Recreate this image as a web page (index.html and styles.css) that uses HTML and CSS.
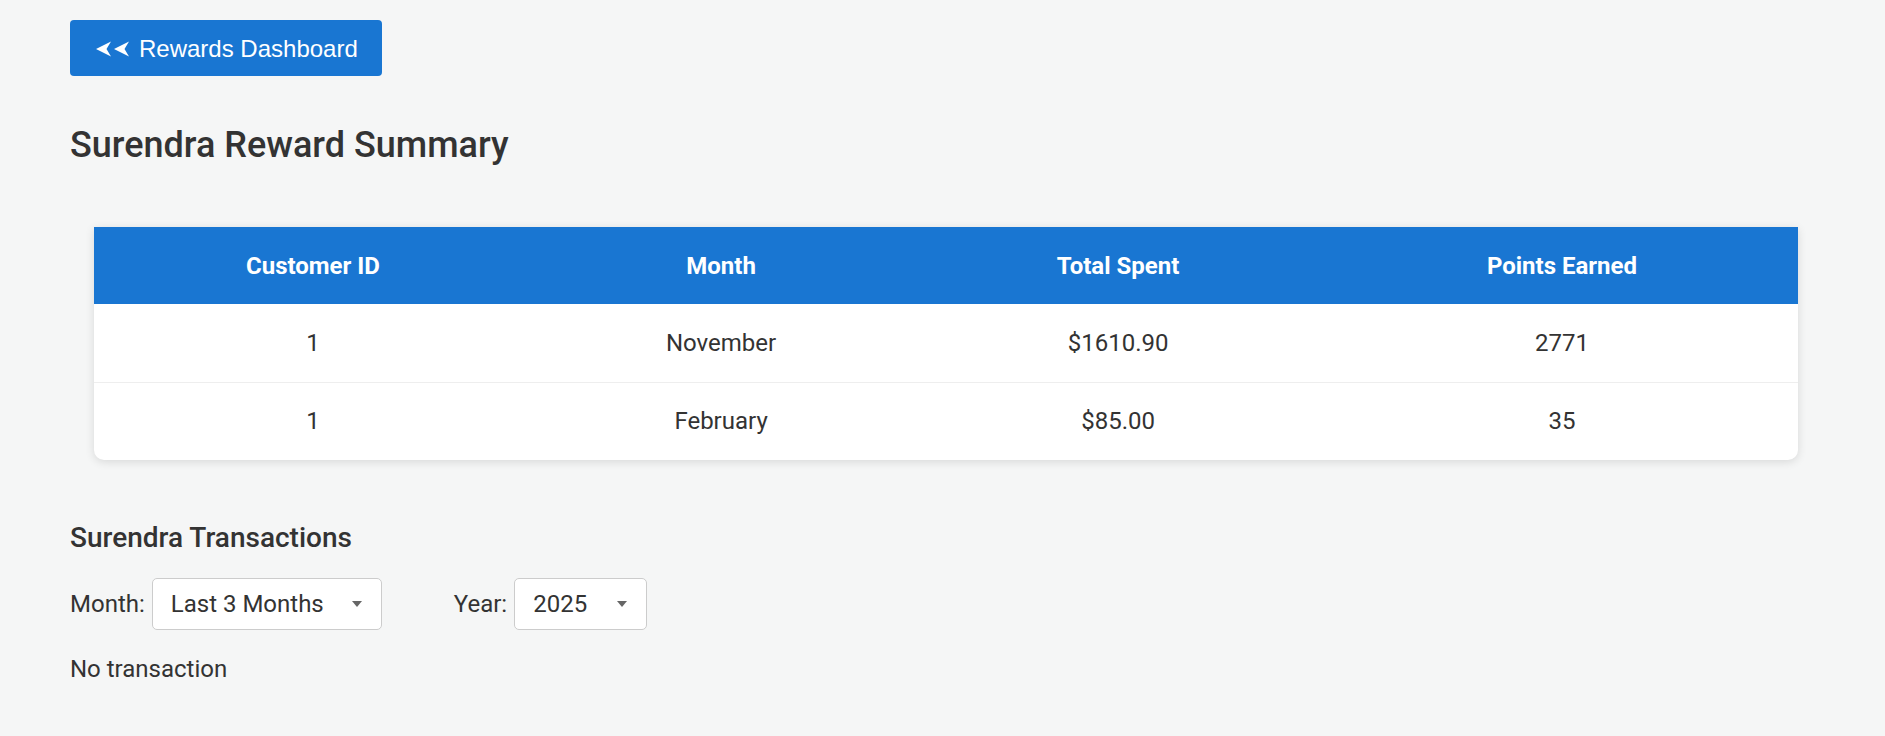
FILE: index.html
```html
<!DOCTYPE html>
<html lang="en">
<head>
<meta charset="utf-8">
<title>Surendra Reward Summary</title>
<link rel="stylesheet" href="styles.css">
</head>
<body>
<main class="page">
  <button class="back-btn" type="button">
    <svg class="back-icon" width="34" height="16" viewBox="0 0 34 16" aria-hidden="true">
      <polygon points="0,8 15,0.5 10.5,8 15,15.5" fill="#fff"/>
      <polygon points="18,8 33,0.5 28.5,8 33,15.5" fill="#fff"/>
    </svg>
    <span>Rewards Dashboard</span>
  </button>

  <h1 class="title">Surendra Reward Summary</h1>

  <div class="card">
    <table class="summary">
      <colgroup>
        <col class="c1"><col class="c2"><col class="c3"><col class="c4">
      </colgroup>
      <thead>
        <tr><th>Customer ID</th><th>Month</th><th>Total Spent</th><th>Points Earned</th></tr>
      </thead>
      <tbody>
        <tr><td>1</td><td>November</td><td>$1610.90</td><td>2771</td></tr>
        <tr><td>1</td><td>February</td><td>$85.00</td><td>35</td></tr>
      </tbody>
    </table>
  </div>

  <h2 class="subtitle">Surendra Transactions</h2>

  <div class="filters">
    <label class="field">
      <span class="label">Month:</span>
      <span class="select-wrap month">
        <select class="select"><option>Last 3 Months</option></select>
      </span>
    </label>
    <label class="field">
      <span class="label">Year:</span>
      <span class="select-wrap year">
        <select class="select"><option>2025</option></select>
      </span>
    </label>
  </div>

  <p class="empty">No transaction</p>
</main>
</body>
</html>
```

FILE: styles.css
```css
* { box-sizing: border-box; }

html, body {
  margin: 0;
  background: #f5f6f6;
}

body {
  font-family: Roboto, "Noto Sans", Arial, sans-serif;
  color: #333;
}

.page {
  padding: 20px 70px 40px 70px;
}

.back-btn {
  display: flex;
  align-items: center;
  gap: 9px;
  width: 312px;
  height: 56px;
  padding: 1px 0 0 26px;
  background: #1976d2;
  color: #fff;
  border: none;
  border-radius: 4px;
  font-family: "Liberation Sans", Arial, sans-serif;
  font-size: 24px;
  line-height: 1;
  cursor: pointer;
}

.back-icon { display: block; flex: none; }

.title {
  margin: 47px 0 0 0;
  font-size: 36px;
  line-height: 44px;
  font-weight: 500;
  color: #333;
}

.card {
  margin: 60px 17px 0 24px;
  background: #fff;
  border-radius: 0 0 10px 10px;
  box-shadow: 0 2px 10px rgba(0, 0, 0, 0.12);
}

.summary {
  width: 100%;
  border-collapse: collapse;
  table-layout: fixed;
}

.c1 { width: 25.7%; }
.c2 { width: 22.2%; }
.c3 { width: 24.4%; }
.c4 { width: 27.7%; }

.summary th {
  height: 77px;
  padding: 0;
  background: #1976d2;
  color: #fff;
  font-size: 24px;
  font-weight: 700;
  text-align: center;
  vertical-align: middle;
}

.summary td {
  height: 78px;
  padding: 0;
  font-size: 24px;
  color: #333;
  text-align: center;
  vertical-align: middle;
}

.summary tbody tr + tr td {
  border-top: 1px solid #eee;
}

.subtitle {
  margin: 61px 0 0 0;
  font-size: 28px;
  line-height: 34px;
  font-weight: 500;
  color: #333;
}

.filters {
  display: flex;
  align-items: center;
  gap: 72px;
  margin-top: 23px;
}

.field {
  display: flex;
  align-items: center;
  gap: 7px;
}

.label {
  font-size: 24px;
  color: #333;
}

.select-wrap {
  position: relative;
  display: block;
}

.select-wrap::after {
  content: "";
  position: absolute;
  right: 20px;
  top: 23px;
  border-left: 5px solid transparent;
  border-right: 5px solid transparent;
  border-top: 6px solid #666;
  pointer-events: none;
}

.select {
  appearance: none;
  -webkit-appearance: none;
  display: block;
  height: 52px;
  padding: 0 0 0 18px;
  background: #fff;
  border: 1px solid #ccc;
  border-radius: 5px;
  font-family: Roboto, "Noto Sans", Arial, sans-serif;
  font-size: 24px;
  color: #333;
}

.month .select { width: 230px; }
.year .select { width: 133px; }

.empty {
  margin: 25px 0 0 0;
  font-size: 24px;
  line-height: 28px;
  color: #333;
}
```
